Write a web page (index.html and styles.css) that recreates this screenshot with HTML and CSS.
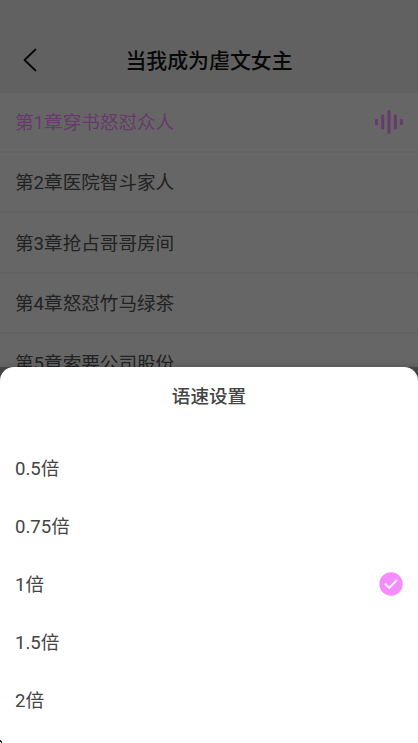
FILE: index.html
```
<!DOCTYPE html>
<html lang="zh-CN">
<head>
<meta charset="utf-8">
<title>当我成为虐文女主</title>
<link rel="stylesheet" href="styles.css">
</head>
<body>
<div class="screen">
  <header class="header">
    <svg class="back" viewBox="0 0 14 24"><path d="M12.5 1.5 1.5 12l11 10.5"/></svg>
    <h1>当我成为虐文女主</h1>
  </header>
  <ul class="chapters">
    <li class="playing"><span>第1章穿书怒怼众人</span>
      <svg class="wave" viewBox="0 0 28 24"><path d="M1.5 10.2v3.6M7.7 6v12M14 1.5v21M20.3 6v12M26.5 10.2v3.6"/></svg>
    </li>
    <li><span>第2章医院智斗家人</span></li>
    <li><span>第3章抢占哥哥房间</span></li>
    <li><span>第4章怒怼竹马绿茶</span></li>
    <li><span>第5章索要公司股份</span></li>
  </ul>
  <div class="sheet-wrap">
    <section class="sheet">
      <h2>语速设置</h2>
      <ul class="options">
        <li><span>0.5倍</span></li>
        <li><span>0.75倍</span></li>
        <li><span>1倍</span>
          <svg class="check" viewBox="0 0 24 24"><circle cx="12" cy="12" r="11.7"/><path d="m6.6 12.2 3.8 3.7 7.1-7.5"/></svg>
        </li>
        <li><span>1.5倍</span></li>
        <li><span>2倍</span></li>
      </ul>
      <svg class="speck" viewBox="0 0 3 3"><path d="M0 0h1v1h1v2H1V2H0z"/></svg>
    </section>
  </div>
</div>
</body>
</html>
```
FILE: styles.css
```
* { box-sizing: border-box; }
body {
  margin: 0;
  font-family: Roboto, "Noto Sans CJK SC", sans-serif;
  color: #444;
}
h1, h2, ul { margin: 0; padding: 0; }
ul { list-style: none; }
.screen {
  position: relative;
  width: 418px;
  height: 743px;
  overflow: hidden;
  background: #666;
}
.header {
  display: grid;
  grid-template-columns: 60px 1fr 60px;
  align-items: center;
  height: 92.6px;
  padding-top: 28px;
  background: #616161;
}
.back {
  width: 14px;
  height: 24px;
  margin-left: 23px;
  fill: none;
  stroke: #080808;
  stroke-width: 1.8;
  stroke-linecap: round;
  stroke-linejoin: round;
}
h1 {
  padding-bottom: 2px;
  text-align: center;
  font-size: 20.9px;
  font-weight: 500;
  color: #080808;
  white-space: nowrap;
}
.chapters li {
  display: flex;
  align-items: center;
  justify-content: space-between;
  height: 60.4px;
  padding: 0 15px;
  border-bottom: 2px solid #626262;
  font-size: 18.6px;
  color: #222;
}
.chapters span { padding-bottom: 3px; }
.chapters .playing { color: #663a6b; }
.wave {
  width: 28px;
  height: 24px;
  fill: none;
  stroke: currentColor;
  stroke-width: 3;
  stroke-linecap: round;
}
.sheet-wrap {
  position: absolute;
  left: 0;
  right: 0;
  bottom: 0;
  height: 376px;
  background: #444;
  box-shadow: 0 0 7px rgba(0, 0, 0, .2);
}
.sheet {
  height: 100%;
  border-radius: 14px 14px 0 0;
  background: #fff;
}
h2 {
  height: 60px;
  line-height: 60px;
  text-align: center;
  font-size: 18.6px;
  font-weight: 500;
}
.options { padding-top: 12px; }
.options li {
  display: flex;
  align-items: center;
  justify-content: space-between;
  height: 58px;
  padding: 0 15px;
  font-size: 18.6px;
}
.options span { padding-bottom: 4px; }
.check { width: 24px; height: 24px; }
.check circle { fill: #f58cff; }
.check path {
  fill: none;
  stroke: #fff;
  stroke-width: 1.9;
  stroke-linecap: round;
  stroke-linejoin: round;
}
.speck {
  position: absolute;
  left: 0;
  bottom: 0;
  width: 3px;
  height: 3px;
  fill: #222;
}
```
